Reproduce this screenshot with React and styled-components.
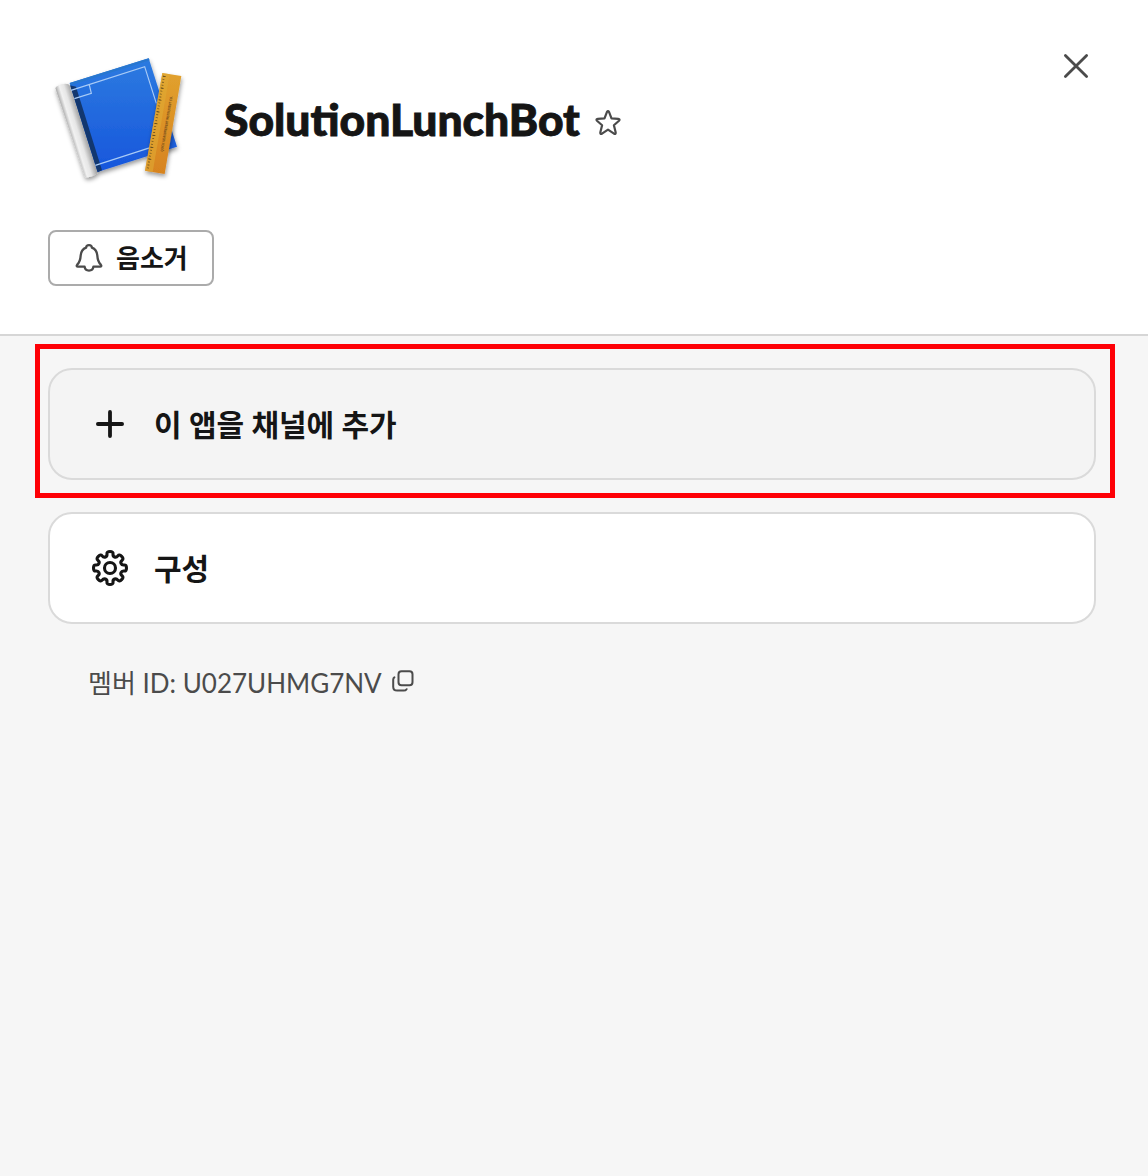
import React from 'react';
import styled, { createGlobalStyle } from 'styled-components';

const GlobalStyle = createGlobalStyle`
  *, *::before, *::after { box-sizing: border-box; }
  body {
    margin: 0;
    background: #f6f6f6;
    color: #151515;
    font-family: Lato, "Noto Sans CJK KR", sans-serif;
    -webkit-font-smoothing: antialiased;
  }
  button { font: inherit; color: inherit; cursor: pointer; }
  svg { display: block; flex: none; }
`;

const Dialog = styled.main`
  min-height: 1176px;
  display: flex;
  flex-direction: column;
`;

const Header = styled.header`
  height: 336px;
  padding: 42px 48px 0;
  background: #fff;
  border-bottom: 2px solid #d6d6d6;
`;

const Identity = styled.div`
  display: flex;
  align-items: flex-start;
  height: 150px;
`;

const Avatar = styled.div`
  margin-top: 6px;
`;

const TitleGroup = styled.div`
  display: flex;
  align-items: center;
  flex: 1;
  margin: 47px 0 0 32px;
  gap: 14px;
`;

const Title = styled.h1`
  margin: 0;
  font-size: 44.4px;
  line-height: 60px;
  font-weight: 900;
  -webkit-text-stroke: 0.9px currentColor;
`;

const IconButton = styled.button`
  display: flex;
  align-items: center;
  justify-content: center;
  width: ${({ $size }) => $size}px;
  height: ${({ $size }) => $size}px;
  margin-top: ${({ $drop = 0 }) => $drop}px;
  padding: 0;
  border: 0;
  background: none;
  color: #4b4b4b;
`;

const MuteButton = styled.button`
  display: flex;
  align-items: center;
  gap: 12px;
  width: 166px;
  height: 56px;
  margin-top: 38px;
  padding: 0 24px;
  background: #fff;
  border: 2px solid #ababab;
  border-radius: 8px;
`;

const MuteLabel = styled.span`
  font-size: 26px;
  line-height: 36px;
  font-weight: 700;
  white-space: nowrap;
`;

const Content = styled.section`
  display: flex;
  flex-direction: column;
  gap: 32px;
  padding: 32px 52px 0 48px;
`;

const HighlightTarget = styled.div`
  position: relative;
`;

const HighlightFrame = styled.div`
  position: absolute;
  inset: -24px -19px -18px -13px;
  border: 5px solid #fe0006;
  pointer-events: none;
`;

const ActionCard = styled.button`
  display: flex;
  align-items: center;
  gap: 24px;
  width: 100%;
  height: 112px;
  padding: 0 40px;
  background: ${({ $hovered }) => ($hovered ? '#f4f4f4' : '#fff')};
  border: 2px solid #dadada;
  border-radius: 24px;
`;

const ActionLabel = styled.span`
  font-size: 30px;
  line-height: 44px;
  font-weight: 700;
`;

const MemberRow = styled.div`
  display: flex;
  align-items: center;
  gap: 8px;
  height: 40px;
  margin-top: 6px;
  padding-left: 40px;
  color: #4b4b4b;
  font-size: 26px;
  line-height: 40px;
`;

const MemberId = styled.span`
  padding-top: 1px;
`;

const BookIcon = () => (
  <svg width="144" height="144" viewBox="24 24 432 432" aria-hidden="true">
    <defs>
      <linearGradient id="cover" x1="0" y1="0" x2="0" y2="1">
        <stop offset="0" stopColor="#2d7be0" />
        <stop offset="1" stopColor="#1756dc" />
      </linearGradient>
      <linearGradient id="spine" gradientUnits="userSpaceOnUse" x1="88" y1="280" x2="130" y2="267">
        <stop offset="0" stopColor="#a9a9a9" />
        <stop offset=".3" stopColor="#f1f1f1" />
        <stop offset=".6" stopColor="#e6e6e6" />
        <stop offset="1" stopColor="#a6a6a6" />
      </linearGradient>
      <linearGradient id="ruler" x1="0" y1="0" x2="0" y2="1">
        <stop offset="0" stopColor="#e1a12e" />
        <stop offset="1" stopColor="#d7831f" />
      </linearGradient>
      <filter id="shadow" x="-20%" y="-20%" width="140%" height="150%">
        <feDropShadow dx="2" dy="8" stdDeviation="6" floodColor="#000" floodOpacity=".4" />
      </filter>
    </defs>
    <g filter="url(#shadow)">
      <path d="M89 129L326 55L411 320L172 396Z" fill="url(#cover)" />
      <path d="M46 144C54 133 76 128 88 134L173 399C164 407 144 414 135 411Z" fill="url(#spine)" />
    </g>
    <path d="M90 136L108 140L186 391L173 397Z" fill="#12376f" />
    <path d="M89 129L326 55L329 61L92 136Z" fill="#2877cf" />
    <path
      d="M93 151L314 80L349 190M103 176L154 160L148 135M166 376L340 320"
      fill="none" stroke="#a9cbf6" strokeWidth="3.5"
    />
    <g filter="url(#shadow)">
      <path d="M367 99L424 108L374 402L315 392Z" fill="url(#ruler)" />
    </g>
    <path d="M367 99L389 103L338 396L315 392Z" fill="#e0aa33" opacity=".6" />
    <path d="M372 108L323 388" stroke="#5e481d" strokeWidth="6" strokeDasharray="2 7" />
    <path d="M373 108L324 388" stroke="#5e481d" strokeWidth="9" strokeDasharray="2.2 33.8" />
    <text
      transform="translate(369 335) rotate(-80.2)" textLength="168" lengthAdjust="spacingAndGlyphs"
      fontFamily="Liberation Sans, sans-serif" fontSize="11" fontWeight="700" fill="#70491b"
    >
      QUICK MEASUREMENT INSTRUMENT CO.
    </text>
  </svg>
);

const StarIcon = () => (
  <svg width="28" height="28" viewBox="0 0 28 28" fill="none" stroke="currentColor" strokeWidth="2.2" strokeLinejoin="round">
    <path d="M12.9 3.1Q14 1.3 15.1 3.1L17.5 9.4L24.2 9.8Q26.4 10.1 25 11.7L19.9 16.2L21.7 23.4Q21.9 25.5 20 24.7L14 20.7L8 24.7Q6.1 25.5 6.3 23.4L8.1 16.2L3 11.7Q1.6 10.1 3.8 9.8L10.5 9.4Z" />
  </svg>
);

const CloseIcon = () => (
  <svg width="28" height="28" viewBox="0 0 28 28" fill="none" stroke="currentColor" strokeWidth="2.8" strokeLinecap="round">
    <path d="M3.4 3.4L24.6 24.6M24.6 3.4L3.4 24.6" />
  </svg>
);

const BellIcon = () => (
  <svg width="30" height="30" viewBox="0 0 30 30" fill="none" stroke="#4b4b4b" strokeWidth="2.3" strokeLinecap="round" strokeLinejoin="round">
    <path d="M12.1 4.6C12.3 1.3 17.7 1.3 17.9 4.6C21.4 5.9 23 8.7 23.3 12.4C23.6 17.4 24.9 19.9 26.8 21.7C27.7 22.7 27.3 23.7 26.1 23.7H19.4C18.8 28.9 11.2 28.9 10.6 23.7H3.9C2.7 23.7 2.3 22.7 3.2 21.7C5.1 19.9 6.4 17.4 6.7 12.4C7 8.7 8.6 5.9 12.1 4.6Z" />
  </svg>
);

const PlusIcon = () => (
  <svg width="40" height="40" viewBox="0 0 40 40" fill="none" stroke="currentColor" strokeWidth="3.8" strokeLinecap="round">
    <path d="M20 7.9V32.1M7.9 20H32.1" />
  </svg>
);

const polar = (radius, degrees) => {
  const a = (degrees * Math.PI) / 180;
  return [20 + radius * Math.cos(a), 20 + radius * Math.sin(a)];
};

const gearCorners = Array.from({ length: 8 }, (_, i) => i * 45).flatMap((a) => [
  polar(16.8, a - 11.5),
  polar(16.8, a + 11.5),
  polar(12.1, a + 13),
  polar(12.1, a + 32),
]);

const gearPath = [...gearCorners, gearCorners[0]]
  .map(([x, y], i) => {
    const [nx, ny] = gearCorners[(i + 1) % 32];
    const mid = `${((x + nx) / 2).toFixed(2)} ${((y + ny) / 2).toFixed(2)}`;
    return i === 0 ? `M${mid}` : `Q${x.toFixed(2)} ${y.toFixed(2)} ${mid}`;
  })
  .join('');

const GearIcon = () => (
  <svg width="40" height="40" viewBox="0 0 40 40" fill="none" stroke="currentColor" strokeWidth="3.1" strokeLinejoin="round">
    <path d={`${gearPath}Z`} />
    <circle cx="20" cy="20" r="5.5" />
  </svg>
);

const CopyIcon = () => (
  <svg width="26" height="26" viewBox="0 0 26 26" fill="none" stroke="currentColor" strokeWidth="2" strokeLinecap="round">
    <rect x="8.5" y="2.2" width="14" height="14" rx="3" />
    <path d="M4.4 8.4C3.6 8.9 3.2 9.8 3.2 10.8V17.7Q3.2 21.6 7.2 21.6H13.8C15 21.6 16 21.1 16.6 20.2" />
  </svg>
);

export default function App() {
  return (
    <Dialog>
      <GlobalStyle />
      <Header>
        <Identity>
          <Avatar><BookIcon /></Avatar>
          <TitleGroup>
            <Title>SolutionLunchBot</Title>
            <IconButton $size={28} $drop={7} aria-label="star"><StarIcon /></IconButton>
          </TitleGroup>
          <IconButton $size={48} aria-label="close"><CloseIcon /></IconButton>
        </Identity>
        <MuteButton>
          <BellIcon />
          <MuteLabel>음소거</MuteLabel>
        </MuteButton>
      </Header>
      <Content>
        <HighlightTarget>
          <ActionCard $hovered>
            <PlusIcon />
            <ActionLabel>이 앱을 채널에 추가</ActionLabel>
          </ActionCard>
          <HighlightFrame />
        </HighlightTarget>
        <ActionCard>
          <GearIcon />
          <ActionLabel>구성</ActionLabel>
        </ActionCard>
        <MemberRow>
          <MemberId>멤버 ID: U027UHMG7NV</MemberId>
          <IconButton $size={26} aria-label="copy"><CopyIcon /></IconButton>
        </MemberRow>
      </Content>
    </Dialog>
  );
}
